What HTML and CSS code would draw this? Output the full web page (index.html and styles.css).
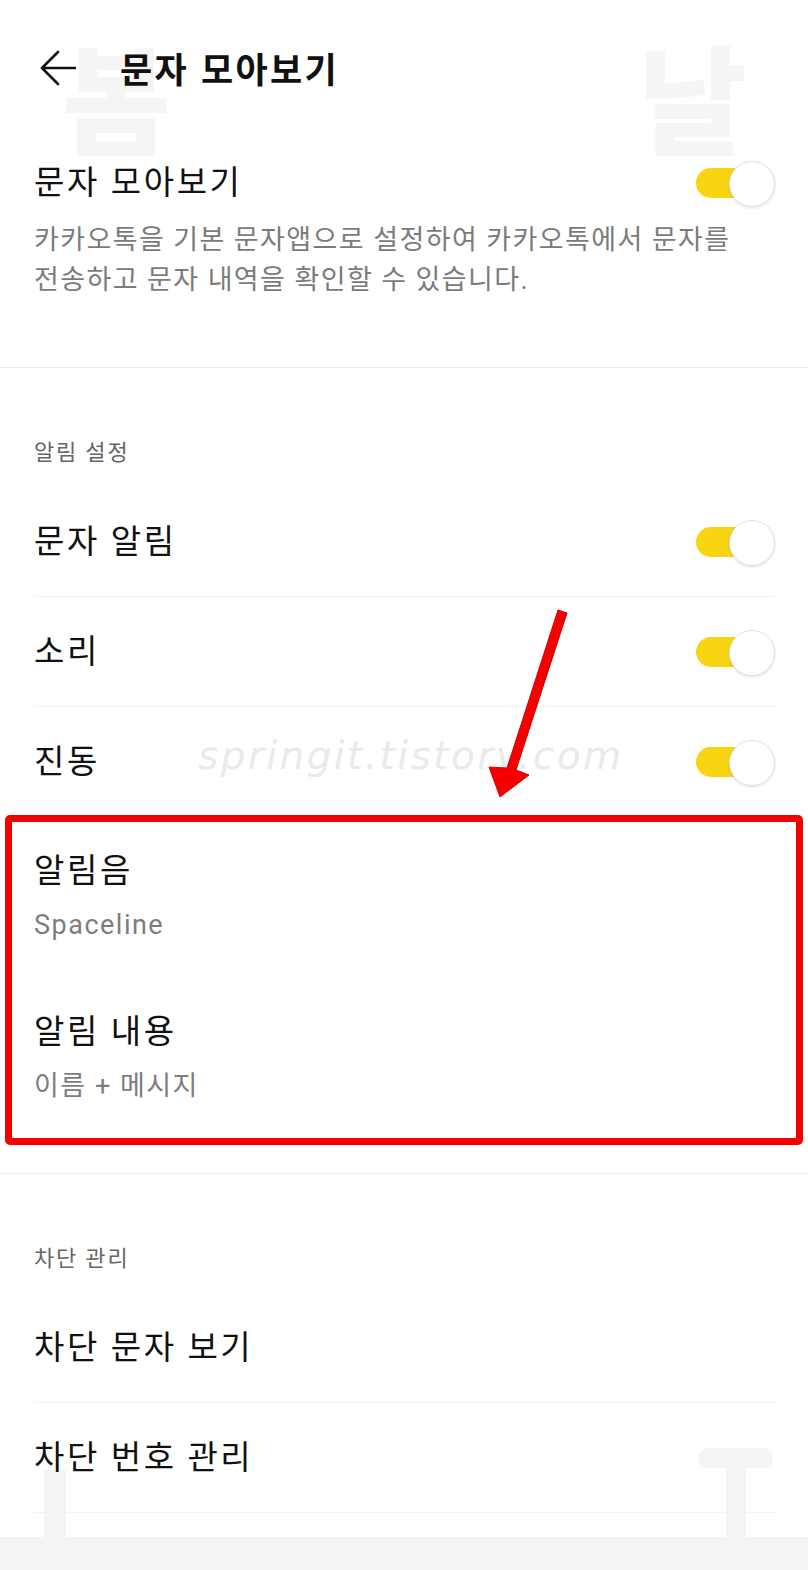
FILE: index.html
```html
<!DOCTYPE html>
<html lang="ko">
<head>
    <meta charset="UTF-8">
    <meta name="viewport" content="width=device-width, initial-scale=1.0">
    <title>문자 모아보기</title>
    <link rel="stylesheet" href="styles.css">
</head>
<body>
    <div class="screen">
        <!-- faint background watermark -->
        <div class="wm-glyph wm-left">봄</div>
        <div class="wm-glyph wm-right">날</div>
        <div class="wm-bar wm-bar-left"></div>
        <div class="wm-t">
            <div class="wm-t-top"></div>
            <div class="wm-t-stem"></div>
        </div>
        <div class="wm-text">springit.tistory.com</div>

        <div class="content">
            <header class="topbar">
                <svg class="back" width="36" height="36" viewBox="0 0 36 36">
                    <path d="M35 18 H2 M18 2 L2 18 L18 34" fill="none" stroke="#111" stroke-width="2.6" stroke-linecap="round" stroke-linejoin="round"/>
                </svg>
                <h1 class="page-title">문자 모아보기</h1>
            </header>

            <section class="intro">
                <div class="intro-head">
                    <span class="row-title">문자 모아보기</span>
                    <span class="toggle"></span>
                </div>
                <p class="desc">카카오톡을 기본 문자앱으로 설정하여 카카오톡에서 문자를<br>전송하고 문자 내역을 확인할 수 있습니다.</p>
            </section>

            <section class="group group-alert">
                <h2 class="group-label">알림 설정</h2>
                <div class="row">
                    <span class="row-title">문자 알림</span>
                    <span class="toggle"></span>
                </div>
                <div class="row">
                    <span class="row-title">소리</span>
                    <span class="toggle"></span>
                </div>
                <div class="row">
                    <span class="row-title">진동</span>
                    <span class="toggle"></span>
                </div>
                <div class="row-two">
                    <div class="row-title">알림음</div>
                    <div class="row-sub">Spaceline</div>
                </div>
                <div class="row-two">
                    <div class="row-title">알림 내용</div>
                    <div class="row-sub">이름 + 메시지</div>
                </div>
            </section>

            <section class="group group-block">
                <h2 class="group-label">차단 관리</h2>
                <div class="row">
                    <span class="row-title">차단 문자 보기</span>
                </div>
                <div class="row">
                    <span class="row-title">차단 번호 관리</span>
                </div>
            </section>

            <div class="navbar"></div>
        </div>

        <!-- red annotation -->
        <div class="mark-box"></div>
        <svg class="mark-arrow" width="808" height="1570" viewBox="0 0 808 1570">
            <polygon points="558,610 567,613 516,770 529,775 500,797 489,767 507,768" fill="#f40000" stroke="#d00000" stroke-width="1" stroke-linejoin="round"/>
        </svg>
    </div>
</body>
</html>
```

FILE: styles.css
```css
* {
    box-sizing: border-box;
}
body {
    margin: 0;
    background-color: #fff;
    font-family: Roboto, 'Noto Sans CJK KR', sans-serif;
    color: #111;
}
.screen {
    position: relative;
    width: 808px;
    height: 1570px;
    overflow: hidden;
}
.content {
    position: relative;
    z-index: 1;
}

/* watermark */
.wm-glyph {
    position: absolute;
    top: 36px;
    font-family: 'Noto Sans CJK KR', sans-serif;
    font-weight: 900;
    font-size: 118px;
    line-height: 1;
    color: #f5f5f5;
    z-index: 0;
}
.wm-left {
    left: 62px;
}
.wm-right {
    left: 638px;
}
.wm-bar {
    position: absolute;
    background-color: #f4f4f4;
    z-index: 0;
}
.wm-bar-left {
    left: 44px;
    top: 1470px;
    width: 22px;
    height: 70px;
}
.wm-t {
    position: absolute;
    left: 698px;
    top: 1448px;
    width: 75px;
    z-index: 0;
    display: flex;
    flex-direction: column;
    align-items: center;
}
.wm-t-top {
    width: 75px;
    height: 20px;
    border-radius: 10px;
    background-color: #f4f4f4;
}
.wm-t-stem {
    width: 20px;
    height: 75px;
    background-color: #f4f4f4;
}
.wm-text {
    position: absolute;
    left: 198px;
    top: 733px;
    font-family: 'DejaVu Sans', sans-serif;
    font-style: italic;
    font-weight: 200;
    font-size: 39px;
    letter-spacing: 2.4px;
    color: #eaeaea;
    z-index: 2;
}

/* header */
.topbar {
    height: 136px;
    display: flex;
    align-items: center;
    padding-left: 40px;
    gap: 44px;
}
.back {
    display: block;
    flex: none;
}
.page-title {
    margin: 0;
    font-family: 'Noto Sans CJK KR', sans-serif;
    font-size: 35px;
    font-weight: 700;
    line-height: 40px;
    letter-spacing: 2.3px;
}

/* rows */
.row-title {
    font-size: 33px;
    line-height: 40px;
    letter-spacing: 2.6px;
    color: #111;
}
.row-sub {
    margin-top: 16px;
    font-size: 27px;
    line-height: 36px;
    letter-spacing: 1.5px;
    color: #7d7d7d;
}
.intro {
    padding: 27px 33px 67px 34px;
    border-bottom: 1px solid #ececec;
}
.intro-head {
    display: flex;
    align-items: center;
    justify-content: space-between;
    height: 40px;
}
.desc {
    margin: 17px 0 0;
    font-size: 27px;
    line-height: 40px;
    letter-spacing: 1.4px;
    color: #7b7b7b;
}
.group {
    padding-top: 70px;
}
.group-alert {
    padding-bottom: 34px;
    border-bottom: 1px solid #ececec;
}
.group-label {
    margin: 0 0 19px;
    padding-left: 34px;
    font-size: 22px;
    font-weight: 400;
    line-height: 30px;
    letter-spacing: 1.8px;
    color: #666;
}
.row {
    height: 110px;
    margin: 0 33px 0 34px;
    display: flex;
    align-items: center;
    justify-content: space-between;
    border-bottom: 1px solid #f3f3f3;
}
.row-two {
    padding: 34px 34px 35px;
}

/* switch */
.toggle {
    position: relative;
    flex: none;
    width: 79px;
    height: 44px;
}
.toggle::before {
    content: '';
    position: absolute;
    left: 0;
    top: 7px;
    width: 58px;
    height: 30px;
    border-radius: 15px;
    background-color: #f7d511;
}
.toggle::after {
    content: '';
    position: absolute;
    right: 0;
    top: 0;
    width: 44px;
    height: 44px;
    border-radius: 50%;
    background-color: #fff;
    border: 1px solid #e2e2e2;
    box-shadow: 0 1px 3px rgba(0, 0, 0, 0.12);
}

.navbar {
    margin-top: 24px;
    height: 33px;
    background-color: #f4f4f4;
}

/* annotation overlay */
.mark-box {
    position: absolute;
    left: 5px;
    top: 815px;
    width: 798px;
    height: 330px;
    border: 7px solid #f40000;
    border-radius: 5px;
    z-index: 3;
}
.mark-arrow {
    position: absolute;
    left: 0;
    top: 0;
    z-index: 3;
    pointer-events: none;
}
```
